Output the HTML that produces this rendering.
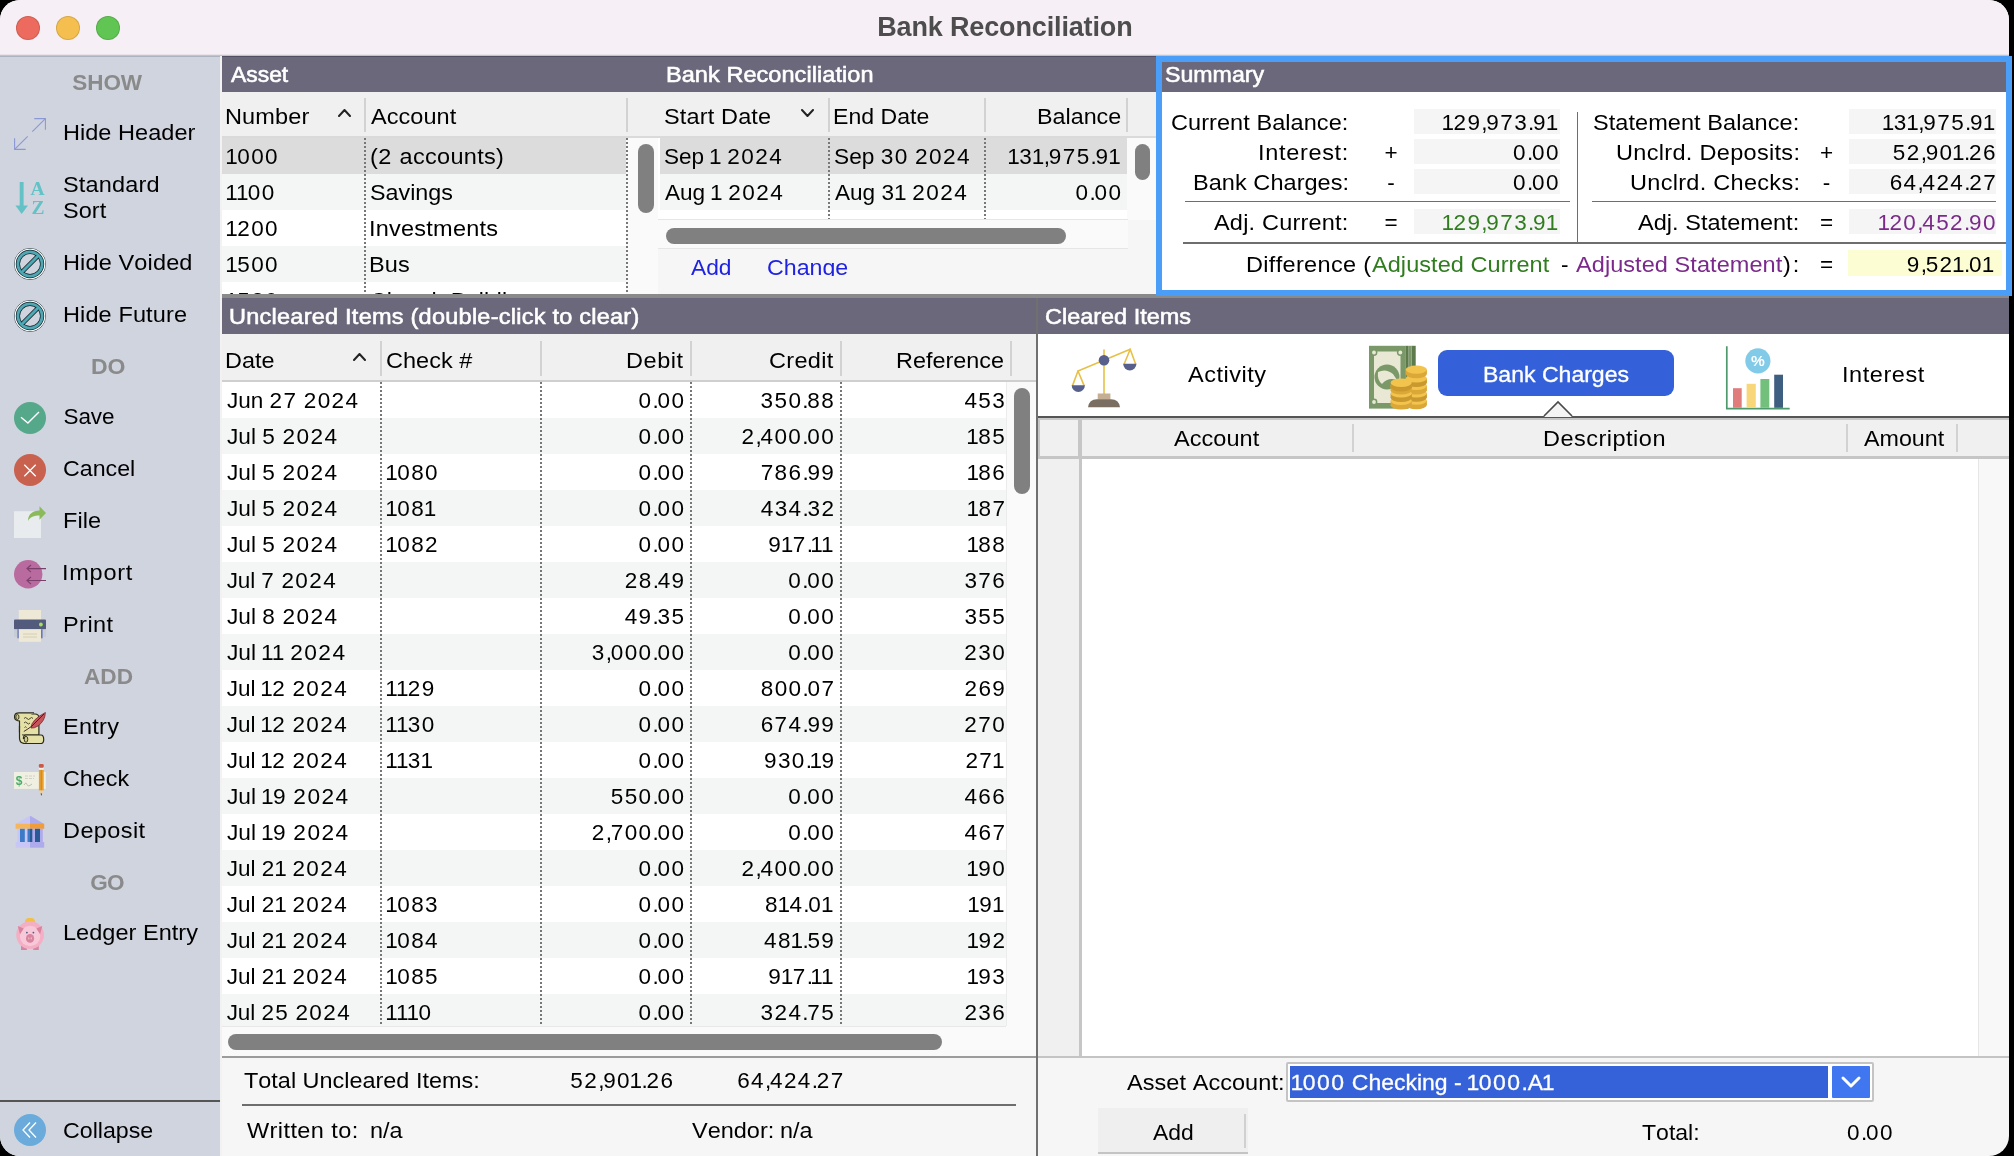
<!DOCTYPE html>
<html><head><meta charset="utf-8"><title>Bank Reconciliation</title>
<style>
html,body{margin:0;padding:0;background:#000;}
body{width:2014px;height:1156px;position:relative;overflow:hidden;font-family:"Liberation Sans", sans-serif;}
#w{position:absolute;left:0;top:0;width:2014px;height:1156px;overflow:hidden;will-change:transform;}
#w div,#w span,#w svg{position:absolute;}
#w span{white-space:pre;font-family:"Liberation Sans", sans-serif;font-kerning:none;}
#w i{font-style:normal;letter-spacing:1.4px}#w i.a{letter-spacing:-.55px;margin-left:-1.36px}#w i.b{letter-spacing:-1.26px}
</style></head><body>
<div id="w">
<div style="left:0;top:0;width:2009px;height:1156px;border-radius:20px;overflow:hidden;background:#f6f6f6">
<div style="left:0px;top:0px;width:2009px;height:55px;background:#f6f0f6;"></div>
<div style="left:0px;top:54px;width:2009px;height:1px;background:#e8e3e8;"></div>
<div style="left:0px;top:55px;width:2009px;height:1px;background:#c6c2c8;"></div>
<div style="left:16px;top:16px;width:24px;height:24px;background:#ec6a5e;border-radius:12px;box-shadow:inset 0 0 0 1px rgba(0,0,0,.13);"></div>
<div style="left:56px;top:16px;width:24px;height:24px;background:#f4bf4f;border-radius:12px;box-shadow:inset 0 0 0 1px rgba(0,0,0,.13);"></div>
<div style="left:96px;top:16px;width:24px;height:24px;background:#61c554;border-radius:12px;box-shadow:inset 0 0 0 1px rgba(0,0,0,.13);"></div>
<span style="left:877.19px;top:13.00px;line-height:28px;font-size:27px;font-weight:700;color:#4d4d4d;letter-spacing:-0.143px;">Bank Reconciliation</span>
<div style="left:0px;top:56px;width:220px;height:1120px;background:#d0d4de;"></div>
<div style="left:220px;top:56px;width:2px;height:1120px;background:#f2f2f2;"></div>
<span style="left:72.35px;top:69.00px;line-height:28px;font-size:22.5px;font-weight:700;color:#8a8a8a;letter-spacing:-0.108px;">SHOW</span>
<span style="left:91.46px;top:353.00px;line-height:28px;font-size:22.5px;font-weight:700;color:#8a8a8a;transform:scaleX(1.0224);transform-origin:0 50%;">DO</span>
<span style="left:84.19px;top:663.00px;line-height:28px;font-size:22.5px;font-weight:700;color:#8a8a8a;transform:scaleX(1.0055);transform-origin:0 50%;">ADD</span>
<span style="left:90.13px;top:869.00px;line-height:28px;font-size:22.5px;font-weight:700;color:#8a8a8a;letter-spacing:-0.635px;">GO</span>
<span style="left:62.57px;top:119.00px;line-height:28px;font-size:22.5px;letter-spacing:0.030px;transform:scaleX(1.0450);transform-origin:0 50%;">Hide Header</span>
<svg style="left:14px;top:118px" width="32" height="32" viewBox="0 0 32 32"><g fill="none" stroke="#8a98d6" stroke-width="1.1"><path d="M18.3 13.7 L31.4 0.6"/><path d="M20.3 0.6 H31.4 V11.7"/><path d="M13.7 18.3 L0.6 31.4"/><path d="M0.6 20.3 V31.4 H11.7"/></g></svg>
<span style="left:62.57px;top:249.00px;line-height:28px;font-size:22.5px;letter-spacing:0.128px;transform:scaleX(1.0450);transform-origin:0 50%;">Hide Voided</span>
<svg style="left:14px;top:248px" width="32" height="32" viewBox="0 0 32 32"><circle cx="16" cy="16" r="15.6" fill="none" stroke="#16262c" stroke-width="0.7"/><circle cx="16" cy="16" r="14.6" fill="none" stroke="#fff" stroke-width="1.4"/><circle cx="16" cy="16" r="12.1" fill="none" stroke="#16262c" stroke-width="4.2"/><circle cx="16" cy="16" r="12.1" fill="none" stroke="#4fa8b4" stroke-width="2.8"/><path d="M8.4 23.6 L23.6 8.4" stroke="#16262c" stroke-width="4.4"/><path d="M7.8 24.2 L24.2 7.8" stroke="#4fa8b4" stroke-width="3"/></svg>
<span style="left:62.57px;top:301.00px;line-height:28px;font-size:22.5px;letter-spacing:0.108px;transform:scaleX(1.0450);transform-origin:0 50%;">Hide Future</span>
<svg style="left:14px;top:300px" width="32" height="32" viewBox="0 0 32 32"><circle cx="16" cy="16" r="15.6" fill="none" stroke="#16262c" stroke-width="0.7"/><circle cx="16" cy="16" r="14.6" fill="none" stroke="#fff" stroke-width="1.4"/><circle cx="16" cy="16" r="12.1" fill="none" stroke="#16262c" stroke-width="4.2"/><circle cx="16" cy="16" r="12.1" fill="none" stroke="#4fa8b4" stroke-width="2.8"/><path d="M8.4 23.6 L23.6 8.4" stroke="#16262c" stroke-width="4.4"/><path d="M7.8 24.2 L24.2 7.8" stroke="#4fa8b4" stroke-width="3"/></svg>
<span style="left:63.48px;top:403.00px;line-height:28px;font-size:22.5px;letter-spacing:-0.088px;">Save</span>
<svg style="left:14px;top:402px" width="32" height="32" viewBox="0 0 32 32"><circle cx="16" cy="16" r="16" fill="#55a88a"/><path d="M7 15.3 L13.9 21.1 L25 9.9" fill="none" stroke="#fff" stroke-width="1.4"/></svg>
<span style="left:63.32px;top:455.00px;line-height:28px;font-size:22.5px;transform:scaleX(1.0313);transform-origin:0 50%;">Cancel</span>
<svg style="left:14px;top:454px" width="32" height="32" viewBox="0 0 32 32"><circle cx="16" cy="16" r="16" fill="#c9614f"/><path d="M10.3 10.8 L21.7 22.2 M21.7 10.8 L10.3 22.2" fill="none" stroke="#fff" stroke-width="1.4"/></svg>
<span style="left:62.57px;top:507.00px;line-height:28px;font-size:22.5px;letter-spacing:0.028px;transform:scaleX(1.0450);transform-origin:0 50%;">File</span>
<svg style="left:14px;top:506px" width="32" height="32" viewBox="0 0 32 32"><rect x="0" y="5.2" width="27" height="26.8" fill="#e8ecef"/><path d="M14 15 C14 8 19 4.5 25.5 4.5 L25.5 0.3 L32 7 L25.5 13.7 L25.5 9.5 C20 9.5 16 11 14 15 Z" fill="#8aba5a"/></svg>
<span style="left:62.33px;top:559.00px;line-height:28px;font-size:22.5px;letter-spacing:0.710px;transform:scaleX(1.0450);transform-origin:0 50%;">Import</span>
<svg style="left:14px;top:558px" width="32" height="32" viewBox="0 0 32 32"><circle cx="14.2" cy="16.2" r="14.2" fill="#b96a9f"/><g fill="none" stroke="#7a3f6a" stroke-width="1.1"><path d="M13 10.6 H32 M17 7 L13 10.6 L17 14.2"/><path d="M13 22.5 H32 M17 18.9 L13 22.5 L17 26.1"/></g></svg>
<span style="left:62.57px;top:611.00px;line-height:28px;font-size:22.5px;letter-spacing:0.420px;transform:scaleX(1.0450);transform-origin:0 50%;">Print</span>
<svg style="left:14px;top:610px" width="32" height="32" viewBox="0 0 32 32"><rect x="4.8" y="0" width="22.2" height="11" fill="#eee9d6"/><rect x="0" y="9.5" width="32" height="10" rx="1" fill="#525b7c"/><rect x="0" y="19.3" width="32" height="7.7" fill="#c8ccd4"/><rect x="3.4" y="19.3" width="1.6" height="9" fill="#6a78b8"/><rect x="27" y="19.3" width="1.6" height="9" fill="#6a78b8"/><rect x="4.8" y="19.3" width="22.2" height="12.5" fill="#eee9d6"/><circle cx="26.9" cy="14.5" r="1.9" fill="#a6e05e"/><path d="M9 24 H23 M9 27 H23" stroke="#d2cbae" stroke-width="0.9"/></svg>
<span style="left:62.57px;top:713.00px;line-height:28px;font-size:22.5px;letter-spacing:0.262px;transform:scaleX(1.0450);transform-origin:0 50%;">Entry</span>
<svg style="left:14px;top:712px" width="32" height="32" viewBox="0 0 32 32"><path d="M5.5 2 H21 Q24.9 2 24.9 6 V23 H9 Q5.5 23 5.5 20 Z" fill="#e4e0a6" stroke="#2a2a1a" stroke-width="1.2"/><path d="M6 9 Q0.5 9 0.5 5 Q0.5 0.9 5 0.9 H20" fill="#e4e0a6" stroke="#2a2a1a" stroke-width="1.2"/><ellipse cx="3.4" cy="5" rx="1.6" ry="2.6" fill="#cfca8c" stroke="#2a2a1a" stroke-width="0.9"/><path d="M5.5 14 V26 Q5.5 31.5 11 31.5 H27 Q29.7 31.5 29.7 27.5 Q29.7 23 27 23 H12 Q9.4 23 9.4 27 " fill="#e4e0a6" stroke="#2a2a1a" stroke-width="1.2"/><ellipse cx="12" cy="27.3" rx="1.8" ry="3" fill="#cfca8c" stroke="#2a2a1a" stroke-width="0.9"/><path d="M10 6.5 q1.5 -2 3 0 t3 0 t3 0 M10 11 q1.5 -2 3 0 t3 0 M10.5 15.5 q1 -1.5 2 0" stroke="#3a3826" stroke-width="0.9" fill="none"/><path d="M17 16 Q17 8 31.4 0.5 Q31 9 24 14 Q20 16.5 17 16 Z" fill="#c4555a" stroke="#7a2a30" stroke-width="0.8"/><path d="M9.8 19.5 Q14 17 18 14 L30 2" stroke="#3a1a1c" stroke-width="0.9" fill="none"/></svg>
<span style="left:63.31px;top:765.00px;line-height:28px;font-size:22.5px;transform:scaleX(1.0372);transform-origin:0 50%;">Check</span>
<svg style="left:14px;top:764px" width="32" height="32" viewBox="0 0 32 32"><rect x="0" y="8" width="31.8" height="16.9" fill="#efefe2"/><text x="1.8" y="20.6" font-family="Liberation Sans" font-weight="700" font-size="12" fill="#4aae68">$</text><path d="M11 12 H21 M11 14.5 H20" stroke="#cfd2c4" stroke-width="1" stroke-dasharray="3 1"/><path d="M10 21 Q12 17.5 13 20.5 T18 20" stroke="#a8b4a0" stroke-width="0.8" fill="none"/><rect x="24.9" y="5.6" width="4.8" height="21" fill="#e8a030"/><rect x="26.7" y="5.6" width="1.2" height="21" fill="#d08a22"/><rect x="24.9" y="3.6" width="4.8" height="2.2" fill="#f2ede6"/><rect x="24.9" y="0" width="4.8" height="3.8" rx="1.2" fill="#c85a4a"/><path d="M24.9 26.6 L27.3 31 L29.7 26.6 Z" fill="#e8cfa2"/><path d="M26.6 29.6 L27.3 32 L28 29.6 Z" fill="#333"/></svg>
<span style="left:62.57px;top:817.00px;line-height:28px;font-size:22.5px;letter-spacing:0.379px;transform:scaleX(1.0450);transform-origin:0 50%;">Deposit</span>
<svg style="left:14px;top:816px" width="32" height="32" viewBox="0 0 32 32"><path d="M16 -0.4 L16 7.9 L1.6 7.9 Z" fill="#c8c6f4"/><path d="M16 -0.4 L30.2 7.9 L16 7.9 Z" fill="#aeabec"/><rect x="1.6" y="7.8" width="14.4" height="5" fill="#f6b55a"/><rect x="16" y="7.8" width="14.2" height="5" fill="#f09c38"/><rect x="3.5" y="12.8" width="12.5" height="13.4" fill="#c8c6f4"/><rect x="16" y="12.8" width="12.8" height="13.4" fill="#aeabec"/><g><rect x="6" y="12.8" width="4.8" height="13.2" fill="#3c7ac8"/><rect x="13.5" y="12.8" width="2.5" height="13.2" fill="#3c7ac8"/><rect x="16" y="12.8" width="2.3" height="13.2" fill="#2a5a96"/><rect x="21" y="12.8" width="5" height="13.2" fill="#2a5a96"/></g><rect x="1.6" y="26" width="14.4" height="5.7" fill="#c8c6f4"/><rect x="16" y="26" width="14.2" height="5.7" fill="#aeabec"/></svg>
<span style="left:62.57px;top:919.00px;line-height:28px;font-size:22.5px;letter-spacing:0.031px;transform:scaleX(1.0450);transform-origin:0 50%;">Ledger Entry</span>
<svg style="left:14px;top:918px" width="32" height="32" viewBox="0 0 32 32"><rect x="7" y="25.5" width="5.9" height="6.5" fill="#d9849e"/><rect x="19.2" y="25.5" width="5.6" height="6.5" fill="#d9849e"/><ellipse cx="16" cy="3.6" rx="5" ry="3.9" fill="#f0c048"/><circle cx="16.1" cy="17.1" r="13.9" fill="#f4afc4"/><circle cx="16.1" cy="18" r="10.2" fill="#f6c8d8"/><path d="M3.8 8 L9.8 10.5 L6 16.2 Z M28.3 8 L22.3 10.5 L26.1 16.2 Z" fill="#d9849e"/><ellipse cx="16.06" cy="20.4" rx="4.1" ry="4.4" fill="#d9849e"/><ellipse cx="14.8" cy="20.4" rx="0.7" ry="1.1" fill="#f0b4c6"/><ellipse cx="17.3" cy="20.4" rx="0.7" ry="1.1" fill="#f0b4c6"/><circle cx="12.9" cy="14.6" r="0.9" fill="#4a5a80"/><circle cx="19.4" cy="14.6" r="0.9" fill="#4a5a80"/></svg>
<span style="left:63.32px;top:1117.00px;line-height:28px;font-size:22.5px;transform:scaleX(1.0304);transform-origin:0 50%;">Collapse</span>
<svg style="left:14px;top:1114px" width="32" height="32" viewBox="0 0 32 32"><circle cx="16" cy="16" r="16" fill="#6aabdc"/><g fill="none" stroke="#fff" stroke-width="1.3"><path d="M16 8.5 L9 16 L16 23.5"/><path d="M22 8.5 L15 16 L22 23.5"/></g></svg>
<span style="left:63.43px;top:171.00px;line-height:28px;font-size:22.5px;letter-spacing:0.158px;transform:scaleX(1.0450);transform-origin:0 50%;">Standard</span>
<span style="left:63.43px;top:197.00px;line-height:28px;font-size:22.5px;letter-spacing:0.038px;transform:scaleX(1.0450);transform-origin:0 50%;">Sort</span>
<svg style="left:14px;top:182px" width="32" height="32" viewBox="0 0 32 32"><g fill="#62c2c6"><rect x="5.7" y="0" width="3.9" height="25"/><path d="M1.4 23.5 L14 23.5 L7.7 32 Z"/></g><g fill="#62c2c6" font-family="Liberation Serif" font-weight="700" font-size="19.5"><text x="16.6" y="13.4">A</text><text x="17.6" y="31.6">Z</text></g></svg>
<div style="left:0px;top:1100px;width:220px;height:2px;background:#555;"></div>
<div style="left:222px;top:56px;width:934px;height:36px;background:#6a687a;"></div>
<div style="left:222px;top:56px;width:934px;height:1px;background:#504e60;"></div>
<div style="left:0px;top:56px;width:220px;height:1.4px;background:#adb3bf;"></div>
<span style="left:230.96px;top:61.00px;line-height:28px;font-size:22.5px;color:#fff;transform:scaleX(1.0167);transform-origin:0 50%;-webkit-text-stroke:0.6px #fff;">Asset</span>
<span style="left:666.07px;top:61.00px;line-height:28px;font-size:22.5px;color:#fff;letter-spacing:0.051px;transform:scaleX(1.0450);transform-origin:0 50%;-webkit-text-stroke:0.6px #fff;">Bank Reconciliation</span>
<div style="left:222px;top:92px;width:934px;height:44px;background:#f0f0f0;"></div>
<div style="left:222px;top:136px;width:934px;height:2px;background:#dadada;"></div>
<div style="left:364px;top:98px;width:2px;height:34px;background:#d2d2d2;"></div>
<div style="left:626px;top:98px;width:2px;height:34px;background:#d2d2d2;"></div>
<div style="left:828px;top:98px;width:2px;height:34px;background:#d2d2d2;"></div>
<div style="left:984px;top:98px;width:2px;height:34px;background:#d2d2d2;"></div>
<div style="left:1126px;top:98px;width:2px;height:34px;background:#d2d2d2;"></div>
<span style="left:225.07px;top:103.00px;line-height:28px;font-size:22.5px;letter-spacing:0.133px;transform:scaleX(1.0450);transform-origin:0 50%;">Number</span>
<span style="left:370.95px;top:103.00px;line-height:28px;font-size:22.5px;letter-spacing:0.042px;transform:scaleX(1.0450);transform-origin:0 50%;">Account</span>
<span style="left:663.93px;top:103.00px;line-height:28px;font-size:22.5px;letter-spacing:0.134px;transform:scaleX(1.0450);transform-origin:0 50%;">Start Date</span>
<span style="left:832.91px;top:103.00px;line-height:28px;font-size:22.5px;transform:scaleX(1.0256);transform-origin:0 50%;">End Date</span>
<span style="left:1036.59px;top:103.00px;line-height:28px;font-size:22.5px;transform:scaleX(1.0361);transform-origin:0 50%;">Balance</span>
<svg style="left:338px;top:109px" width="13" height="8" viewBox="0 0 13 8"><path d="M1 7 L6.5 1 L12 7" fill="none" stroke="#222" stroke-width="2" stroke-linecap="round" stroke-linejoin="round"/></svg>
<svg style="left:801px;top:109px" width="13" height="8" viewBox="0 0 13 8"><path d="M1 1 L6.5 7 L12 1" fill="none" stroke="#222" stroke-width="2" stroke-linecap="round" stroke-linejoin="round"/></svg>
<div style="left:222px;top:138px;width:436px;height:156px;overflow:hidden;background:#fff">
<div style="left:0px;top:0px;width:404px;height:36px;background:#dcdcdc;"></div>
<span style="left:4.65px;top:5.00px;line-height:28px;font-size:22.5px;"><i class=a>1</i><i class=d>000</i></span>
<span style="left:147.54px;top:5.00px;line-height:28px;font-size:22.5px;letter-spacing:0.294px;transform:scaleX(1.0450);transform-origin:0 50%;">(<i class=d>2</i> accounts)</span>
<div style="left:0px;top:36px;width:404px;height:36px;background:#f4f5f5;"></div>
<span style="left:4.65px;top:41.00px;line-height:28px;font-size:22.5px;"><i class=a>1</i><i class=a>1</i><i class=d>00</i></span>
<span style="left:147.94px;top:41.00px;line-height:28px;font-size:22.5px;transform:scaleX(1.0357);transform-origin:0 50%;">Savings</span>
<div style="left:0px;top:72px;width:404px;height:36px;background:#fff;"></div>
<span style="left:4.65px;top:77.00px;line-height:28px;font-size:22.5px;"><i class=a>1</i><i class=d>200</i></span>
<span style="left:146.83px;top:77.00px;line-height:28px;font-size:22.5px;letter-spacing:0.216px;transform:scaleX(1.0450);transform-origin:0 50%;">Investments</span>
<div style="left:0px;top:108px;width:404px;height:36px;background:#f4f5f5;"></div>
<span style="left:4.65px;top:113.00px;line-height:28px;font-size:22.5px;"><i class=a>1</i><i class=d>500</i></span>
<span style="left:147.07px;top:113.00px;line-height:28px;font-size:22.5px;letter-spacing:0.126px;transform:scaleX(1.0450);transform-origin:0 50%;">Bus</span>
<div style="left:0px;top:144px;width:404px;height:36px;background:#fff;"></div>
<span style="left:4.65px;top:149.00px;line-height:28px;font-size:22.5px;"><i class=a>1</i><i class=d>520</i></span>
<span style="left:147.83px;top:149.00px;line-height:28px;font-size:22.5px;transform:scaleX(1.0240);transform-origin:0 50%;">Church Building</span>
<div style="left:404px;top:0px;width:32px;height:156px;background:#fafafa;"></div>
<div style="left:142px;top:0px;width:2px;height:156px;background:repeating-linear-gradient(to bottom,#777 0,#777 2px,transparent 2px,transparent 4px)"></div>
<div style="left:404px;top:0px;width:2px;height:156px;background:repeating-linear-gradient(to bottom,#777 0,#777 2px,transparent 2px,transparent 4px)"></div>
<div style="left:416px;top:6px;width:16px;height:69px;background:#808080;border-radius:8px;"></div>
</div>
<div style="left:658px;top:138px;width:498px;height:82px;overflow:hidden;background:#fff">
<div style="left:2px;top:0px;width:467px;height:36px;background:#dcdcdc;"></div>
<span style="left:5.98px;top:5.00px;line-height:28px;font-size:22.5px;transform:scaleX(1.0025);transform-origin:0 50%;">Sep <i class=a>1</i> <i class=d>2024</i></span>
<span style="left:175.97px;top:5.00px;line-height:28px;font-size:22.5px;transform:scaleX(1.0080);transform-origin:0 50%;">Sep <i class=d>30</i> <i class=d>2024</i></span>
<span style="left:350.69px;top:5.00px;line-height:28px;font-size:22.5px;"><i class=a>1</i><i class=d>3</i><i class=a>1</i><i class=b>,</i><i class=d>975</i><i class=b>.</i><i class=d>9</i><i class=a>1</i></span>
<div style="left:2px;top:36px;width:467px;height:36px;background:#f4f5f5;"></div>
<span style="left:6.96px;top:41.00px;line-height:28px;font-size:22.5px;transform:scaleX(1.0027);transform-origin:0 50%;">Aug <i class=a>1</i> <i class=d>2024</i></span>
<span style="left:176.96px;top:41.00px;line-height:28px;font-size:22.5px;transform:scaleX(1.0030);transform-origin:0 50%;">Aug <i class=d>3</i><i class=a>1</i> <i class=d>2024</i></span>
<span style="left:417.55px;top:41.00px;line-height:28px;font-size:22.5px;"><i class=d>0</i><i class=b>.</i><i class=d>00</i></span>
<div style="left:2px;top:72px;width:467px;height:36px;background:#fff;"></div>
<span style="left:6.63px;top:77.00px;line-height:28px;font-size:22.5px;letter-spacing:0.030px;transform:scaleX(1.0450);transform-origin:0 50%;">Jul <i class=a>1</i> <i class=d>2024</i></span>
<span style="left:176.65px;top:77.00px;line-height:28px;font-size:22.5px;transform:scaleX(1.0082);transform-origin:0 50%;">Jul <i class=d>3</i><i class=a>1</i> <i class=d>2024</i></span>
<span style="left:417.55px;top:77.00px;line-height:28px;font-size:22.5px;"><i class=d>0</i><i class=b>.</i><i class=d>00</i></span>
<div style="left:170px;top:0px;width:2px;height:82px;background:repeating-linear-gradient(to bottom,#777 0,#777 2px,transparent 2px,transparent 4px)"></div>
<div style="left:326px;top:0px;width:2px;height:82px;background:repeating-linear-gradient(to bottom,#777 0,#777 2px,transparent 2px,transparent 4px)"></div>
<div style="left:469px;top:0px;width:29px;height:82px;background:#fafafa;"></div>
<div style="left:477px;top:6px;width:15px;height:36px;background:#808080;border-radius:7.5px;"></div>
</div>
<div style="left:658px;top:220px;width:470px;height:28px;background:#fafafa;"></div>
<div style="left:658px;top:219px;width:470px;height:1px;background:#e6e6e6;"></div>
<div style="left:658px;top:248px;width:470px;height:1px;background:#e6e6e6;"></div>
<div style="left:666px;top:228px;width:400px;height:16px;background:#808080;border-radius:8px;"></div>
<div style="left:658px;top:249px;width:498px;height:45px;background:#f6f6f6;"></div>
<div style="left:1128px;top:220px;width:28px;height:29px;background:#f6f6f6;"></div>
<div style="left:680px;top:250px;width:300px;height:25.5px;overflow:hidden">
<span style="left:10.96px;top:3.50px;line-height:28px;font-size:22.5px;color:#1f22e0;transform:scaleX(1.0119);transform-origin:0 50%;">Add</span>
<span style="left:86.82px;top:3.50px;line-height:28px;font-size:22.5px;color:#1f22e0;transform:scaleX(1.0303);transform-origin:0 50%;">Change</span>
</div>
<div style="left:1162px;top:62px;width:844px;height:228px;background:#fff;"></div>
<div style="left:1162px;top:62px;width:844px;height:30px;background:#6a687a;"></div>
<span style="left:1164.95px;top:60.50px;line-height:28px;font-size:22.5px;color:#fff;transform:scaleX(1.0294);transform-origin:0 50%;-webkit-text-stroke:0.6px #fff;">Summary</span>
<span style="left:1171.31px;top:109.00px;line-height:28px;font-size:22.5px;letter-spacing:0.058px;transform:scaleX(1.0450);transform-origin:0 50%;">Current Balance:</span>
<div style="left:1414px;top:109px;width:146px;height:25px;background:#f5f5f5;"></div>
<span style="left:1442.88px;top:109.00px;line-height:28px;font-size:22.5px;"><i class=a>1</i><i class=d>29</i><i class=b>,</i><i class=d>973</i><i class=b>.</i><i class=d>9</i><i class=a>1</i></span>
<span style="left:1258.33px;top:139.00px;line-height:28px;font-size:22.5px;letter-spacing:0.642px;transform:scaleX(1.0450);transform-origin:0 50%;">Interest:</span>
<span style="left:1384.44px;top:139.00px;line-height:28px;font-size:22.5px;letter-spacing:0.150px;">+</span>
<div style="left:1414px;top:139px;width:146px;height:25px;background:#f5f5f5;"></div>
<span style="left:1513.05px;top:139.00px;line-height:28px;font-size:22.5px;"><i class=d>0</i><i class=b>.</i><i class=d>00</i></span>
<span style="left:1192.57px;top:169.00px;line-height:28px;font-size:22.5px;letter-spacing:0.044px;transform:scaleX(1.0450);transform-origin:0 50%;">Bank Charges:</span>
<span style="left:1387.25px;top:169.00px;line-height:28px;font-size:22.5px;letter-spacing:0.150px;">-</span>
<div style="left:1414px;top:169px;width:146px;height:25px;background:#f5f5f5;"></div>
<span style="left:1513.05px;top:169.00px;line-height:28px;font-size:22.5px;"><i class=d>0</i><i class=b>.</i><i class=d>00</i></span>
<span style="left:1214.45px;top:209.00px;line-height:28px;font-size:22.5px;letter-spacing:0.176px;transform:scaleX(1.0450);transform-origin:0 50%;">Adj. Current:</span>
<span style="left:1384.44px;top:209.00px;line-height:28px;font-size:22.5px;letter-spacing:0.150px;">=</span>
<div style="left:1414px;top:209px;width:146px;height:25px;background:#f5f5f5;"></div>
<span style="left:1442.88px;top:209.00px;line-height:28px;font-size:22.5px;color:#2f7d1f;"><i class=a>1</i><i class=d>29</i><i class=b>,</i><i class=d>973</i><i class=b>.</i><i class=d>9</i><i class=a>1</i></span>
<span style="left:1593.43px;top:109.00px;line-height:28px;font-size:22.5px;letter-spacing:0.057px;transform:scaleX(1.0450);transform-origin:0 50%;">Statement Balance:</span>
<div style="left:1849px;top:109px;width:147px;height:25px;background:#f5f5f5;"></div>
<span style="left:1883.19px;top:109.00px;line-height:28px;font-size:22.5px;"><i class=a>1</i><i class=d>3</i><i class=a>1</i><i class=b>,</i><i class=d>975</i><i class=b>.</i><i class=d>9</i><i class=a>1</i></span>
<span style="left:1615.69px;top:139.00px;line-height:28px;font-size:22.5px;letter-spacing:0.296px;transform:scaleX(1.0450);transform-origin:0 50%;">Unclrd. Deposits:</span>
<span style="left:1819.94px;top:139.00px;line-height:28px;font-size:22.5px;letter-spacing:0.150px;">+</span>
<div style="left:1849px;top:139px;width:147px;height:25px;background:#f5f5f5;"></div>
<span style="left:1892.82px;top:139.00px;line-height:28px;font-size:22.5px;"><i class=d>52</i><i class=b>,</i><i class=d>90</i><i class=a>1</i><i class=b>.</i><i class=d>26</i></span>
<span style="left:1629.69px;top:169.00px;line-height:28px;font-size:22.5px;letter-spacing:0.275px;transform:scaleX(1.0450);transform-origin:0 50%;">Unclrd. Checks:</span>
<span style="left:1822.75px;top:169.00px;line-height:28px;font-size:22.5px;letter-spacing:0.150px;">-</span>
<div style="left:1849px;top:169px;width:147px;height:25px;background:#f5f5f5;"></div>
<span style="left:1889.66px;top:169.00px;line-height:28px;font-size:22.5px;"><i class=d>64</i><i class=b>,</i><i class=d>424</i><i class=b>.</i><i class=d>27</i></span>
<span style="left:1638.45px;top:209.00px;line-height:28px;font-size:22.5px;letter-spacing:0.030px;transform:scaleX(1.0450);transform-origin:0 50%;">Adj. Statement:</span>
<span style="left:1819.94px;top:209.00px;line-height:28px;font-size:22.5px;letter-spacing:0.150px;">=</span>
<div style="left:1849px;top:209px;width:147px;height:25px;background:#f5f5f5;"></div>
<span style="left:1878.80px;top:209.00px;line-height:28px;font-size:22.5px;color:#7b2a8b;"><i class=a>1</i><i class=d>20</i><i class=b>,</i><i class=d>452</i><i class=b>.</i><i class=d>90</i></span>
<div style="left:1185px;top:200.5px;width:385px;height:1.5px;background:#6e6e6e;"></div>
<div style="left:1592px;top:200.5px;width:404px;height:1.5px;background:#6e6e6e;"></div>
<div style="left:1576.5px;top:112px;width:1.5px;height:131px;background:#6e6e6e;"></div>
<div style="left:1183px;top:242px;width:823px;height:1.5px;background:#6e6e6e;"></div>
<div style="left:1848px;top:250px;width:154px;height:25.8px;background:#fdfdd4;"></div>
<span style="left:1906.71px;top:251.00px;line-height:28px;font-size:22.5px;"><i class=d>9</i><i class=b>,</i><i class=d>52</i><i class=a>1</i><i class=b>.</i><i class=d>0</i><i class=a>1</i></span>
<span style="left:1819.94px;top:251.00px;line-height:28px;font-size:22.5px;letter-spacing:0.150px;">=</span>
<span style="left:1783.36px;top:251.00px;line-height:28px;font-size:22.5px;letter-spacing:1.840px;transform:scaleX(1.0450);transform-origin:0 50%;">):</span>
<span style="left:1576.45px;top:251.00px;line-height:28px;font-size:22.5px;color:#7b2a8b;letter-spacing:0.057px;transform:scaleX(1.0450);transform-origin:0 50%;">Adjusted Statement</span>
<span style="left:1561.01px;top:251.00px;line-height:28px;font-size:22.5px;letter-spacing:0.150px;">-</span>
<span style="left:1372.45px;top:251.00px;line-height:28px;font-size:22.5px;color:#2f7d1f;letter-spacing:0.050px;transform:scaleX(1.0450);transform-origin:0 50%;">Adjusted Current</span>
<span style="left:1246.07px;top:251.00px;line-height:28px;font-size:22.5px;letter-spacing:0.308px;transform:scaleX(1.0450);transform-origin:0 50%;">Difference (</span>
<div style="left:222px;top:294px;width:1787px;height:4px;background:#8a8a8a;"></div>
<div style="left:222px;top:298px;width:814px;height:36px;background:#6a687a;"></div>
<span style="left:229.19px;top:303.00px;line-height:28px;font-size:22.5px;color:#fff;letter-spacing:0.229px;transform:scaleX(1.0450);transform-origin:0 50%;-webkit-text-stroke:0.6px #fff;">Uncleared Items (double-click to clear)</span>
<div style="left:222px;top:334px;width:814px;height:46px;background:#f0f0f0;"></div>
<div style="left:222px;top:380px;width:814px;height:2px;background:#cfcfcf;"></div>
<div style="left:380px;top:341px;width:2px;height:35px;background:#d2d2d2;"></div>
<div style="left:540px;top:341px;width:2px;height:35px;background:#d2d2d2;"></div>
<div style="left:690px;top:341px;width:2px;height:35px;background:#d2d2d2;"></div>
<div style="left:840px;top:341px;width:2px;height:35px;background:#d2d2d2;"></div>
<div style="left:1010px;top:341px;width:2px;height:35px;background:#d2d2d2;"></div>
<span style="left:225.28px;top:347.00px;line-height:28px;font-size:22.5px;transform:scaleX(1.0407);transform-origin:0 50%;">Date</span>
<span style="left:385.81px;top:347.00px;line-height:28px;font-size:22.5px;letter-spacing:0.009px;transform:scaleX(1.0450);transform-origin:0 50%;">Check #</span>
<span style="left:626.07px;top:347.00px;line-height:28px;font-size:22.5px;letter-spacing:0.529px;transform:scaleX(1.0450);transform-origin:0 50%;">Debit</span>
<span style="left:768.81px;top:347.00px;line-height:28px;font-size:22.5px;letter-spacing:0.315px;transform:scaleX(1.0450);transform-origin:0 50%;">Credit</span>
<span style="left:896.38px;top:347.00px;line-height:28px;font-size:22.5px;transform:scaleX(1.0400);transform-origin:0 50%;">Reference</span>
<svg style="left:353px;top:353px" width="13" height="8" viewBox="0 0 13 8"><path d="M1 7 L6.5 1 L12 7" fill="none" stroke="#222" stroke-width="2" stroke-linecap="round" stroke-linejoin="round"/></svg>
<div style="left:222px;top:382px;width:814px;height:644px;overflow:hidden;background:#fff">
<span style="left:4.65px;top:5.00px;line-height:28px;font-size:22.5px;transform:scaleX(1.0012);transform-origin:0 50%;">Jun <i class=d>27</i> <i class=d>2024</i></span>
<span style="left:416.55px;top:5.00px;line-height:28px;font-size:22.5px;"><i class=d>0</i><i class=b>.</i><i class=d>00</i></span>
<span style="left:538.62px;top:5.00px;line-height:28px;font-size:22.5px;"><i class=d>350</i><i class=b>.</i><i class=d>88</i></span>
<span style="left:742.45px;top:5.00px;line-height:28px;font-size:22.5px;"><i class=d>453</i></span>
<div style="left:0px;top:36px;width:784px;height:36px;background:#f4f5f5;"></div>
<span style="left:4.65px;top:41.00px;line-height:28px;font-size:22.5px;transform:scaleX(1.0053);transform-origin:0 50%;">Jul <i class=d>5</i> <i class=d>2024</i></span>
<span style="left:416.55px;top:41.00px;line-height:28px;font-size:22.5px;"><i class=d>0</i><i class=b>.</i><i class=d>00</i></span>
<span style="left:519.62px;top:41.00px;line-height:28px;font-size:22.5px;"><i class=d>2</i><i class=b>,</i><i class=d>400</i><i class=b>.</i><i class=d>00</i></span>
<span style="left:745.71px;top:41.00px;line-height:28px;font-size:22.5px;"><i class=a>1</i><i class=d>85</i></span>
<span style="left:4.65px;top:77.00px;line-height:28px;font-size:22.5px;transform:scaleX(1.0053);transform-origin:0 50%;">Jul <i class=d>5</i> <i class=d>2024</i></span>
<span style="left:164.65px;top:77.00px;line-height:28px;font-size:22.5px;"><i class=a>1</i><i class=d>080</i></span>
<span style="left:416.55px;top:77.00px;line-height:28px;font-size:22.5px;"><i class=d>0</i><i class=b>.</i><i class=d>00</i></span>
<span style="left:538.71px;top:77.00px;line-height:28px;font-size:22.5px;"><i class=d>786</i><i class=b>.</i><i class=d>99</i></span>
<span style="left:745.76px;top:77.00px;line-height:28px;font-size:22.5px;"><i class=a>1</i><i class=d>86</i></span>
<div style="left:0px;top:108px;width:784px;height:36px;background:#f4f5f5;"></div>
<span style="left:4.65px;top:113.00px;line-height:28px;font-size:22.5px;transform:scaleX(1.0053);transform-origin:0 50%;">Jul <i class=d>5</i> <i class=d>2024</i></span>
<span style="left:164.65px;top:113.00px;line-height:28px;font-size:22.5px;"><i class=a>1</i><i class=d>08</i><i class=a>1</i></span>
<span style="left:416.55px;top:113.00px;line-height:28px;font-size:22.5px;"><i class=d>0</i><i class=b>.</i><i class=d>00</i></span>
<span style="left:538.77px;top:113.00px;line-height:28px;font-size:22.5px;"><i class=d>434</i><i class=b>.</i><i class=d>32</i></span>
<span style="left:745.90px;top:113.00px;line-height:28px;font-size:22.5px;"><i class=a>1</i><i class=d>87</i></span>
<span style="left:4.65px;top:149.00px;line-height:28px;font-size:22.5px;transform:scaleX(1.0053);transform-origin:0 50%;">Jul <i class=d>5</i> <i class=d>2024</i></span>
<span style="left:164.65px;top:149.00px;line-height:28px;font-size:22.5px;"><i class=a>1</i><i class=d>082</i></span>
<span style="left:416.55px;top:149.00px;line-height:28px;font-size:22.5px;"><i class=d>0</i><i class=b>.</i><i class=d>00</i></span>
<span style="left:546.22px;top:149.00px;line-height:28px;font-size:22.5px;"><i class=d>9</i><i class=a>1</i><i class=d>7</i><i class=b>.</i><i class=a>1</i><i class=a>1</i></span>
<span style="left:745.75px;top:149.00px;line-height:28px;font-size:22.5px;"><i class=a>1</i><i class=d>88</i></span>
<div style="left:0px;top:180px;width:784px;height:36px;background:#f4f5f5;"></div>
<span style="left:4.65px;top:185.00px;line-height:28px;font-size:22.5px;letter-spacing:-0.084px;">Jul <i class=d>7</i> <i class=d>2024</i></span>
<span style="left:402.82px;top:185.00px;line-height:28px;font-size:22.5px;"><i class=d>28</i><i class=b>.</i><i class=d>49</i></span>
<span style="left:566.35px;top:185.00px;line-height:28px;font-size:22.5px;"><i class=d>0</i><i class=b>.</i><i class=d>00</i></span>
<span style="left:742.45px;top:185.00px;line-height:28px;font-size:22.5px;"><i class=d>376</i></span>
<span style="left:4.65px;top:221.00px;line-height:28px;font-size:22.5px;transform:scaleX(1.0053);transform-origin:0 50%;">Jul <i class=d>8</i> <i class=d>2024</i></span>
<span style="left:402.70px;top:221.00px;line-height:28px;font-size:22.5px;"><i class=d>49</i><i class=b>.</i><i class=d>35</i></span>
<span style="left:566.35px;top:221.00px;line-height:28px;font-size:22.5px;"><i class=d>0</i><i class=b>.</i><i class=d>00</i></span>
<span style="left:742.40px;top:221.00px;line-height:28px;font-size:22.5px;"><i class=d>355</i></span>
<div style="left:0px;top:252px;width:784px;height:36px;background:#f4f5f5;"></div>
<span style="left:4.64px;top:257.00px;line-height:28px;font-size:22.5px;transform:scaleX(1.0111);transform-origin:0 50%;">Jul <i class=a>1</i><i class=a>1</i> <i class=d>2024</i></span>
<span style="left:369.82px;top:257.00px;line-height:28px;font-size:22.5px;"><i class=d>3</i><i class=b>,</i><i class=d>000</i><i class=b>.</i><i class=d>00</i></span>
<span style="left:566.35px;top:257.00px;line-height:28px;font-size:22.5px;"><i class=d>0</i><i class=b>.</i><i class=d>00</i></span>
<span style="left:742.34px;top:257.00px;line-height:28px;font-size:22.5px;"><i class=d>230</i></span>
<span style="left:4.65px;top:293.00px;line-height:28px;font-size:22.5px;">Jul <i class=a>1</i><i class=d>2</i> <i class=d>2024</i></span>
<span style="left:164.65px;top:293.00px;line-height:28px;font-size:22.5px;"><i class=a>1</i><i class=a>1</i><i class=d>29</i></span>
<span style="left:416.55px;top:293.00px;line-height:28px;font-size:22.5px;"><i class=d>0</i><i class=b>.</i><i class=d>00</i></span>
<span style="left:538.77px;top:293.00px;line-height:28px;font-size:22.5px;"><i class=d>800</i><i class=b>.</i><i class=d>07</i></span>
<span style="left:742.53px;top:293.00px;line-height:28px;font-size:22.5px;"><i class=d>269</i></span>
<div style="left:0px;top:324px;width:784px;height:36px;background:#f4f5f5;"></div>
<span style="left:4.65px;top:329.00px;line-height:28px;font-size:22.5px;">Jul <i class=a>1</i><i class=d>2</i> <i class=d>2024</i></span>
<span style="left:164.65px;top:329.00px;line-height:28px;font-size:22.5px;"><i class=a>1</i><i class=a>1</i><i class=d>30</i></span>
<span style="left:416.55px;top:329.00px;line-height:28px;font-size:22.5px;"><i class=d>0</i><i class=b>.</i><i class=d>00</i></span>
<span style="left:538.71px;top:329.00px;line-height:28px;font-size:22.5px;"><i class=d>674</i><i class=b>.</i><i class=d>99</i></span>
<span style="left:742.34px;top:329.00px;line-height:28px;font-size:22.5px;"><i class=d>270</i></span>
<span style="left:4.65px;top:365.00px;line-height:28px;font-size:22.5px;">Jul <i class=a>1</i><i class=d>2</i> <i class=d>2024</i></span>
<span style="left:164.65px;top:365.00px;line-height:28px;font-size:22.5px;"><i class=a>1</i><i class=a>1</i><i class=d>3</i><i class=a>1</i></span>
<span style="left:416.55px;top:365.00px;line-height:28px;font-size:22.5px;"><i class=d>0</i><i class=b>.</i><i class=d>00</i></span>
<span style="left:542.02px;top:365.00px;line-height:28px;font-size:22.5px;"><i class=d>930</i><i class=b>.</i><i class=a>1</i><i class=d>9</i></span>
<span style="left:743.42px;top:365.00px;line-height:28px;font-size:22.5px;"><i class=d>27</i><i class=a>1</i></span>
<div style="left:0px;top:396px;width:784px;height:36px;background:#f4f5f5;"></div>
<span style="left:4.65px;top:401.00px;line-height:28px;font-size:22.5px;transform:scaleX(1.0082);transform-origin:0 50%;">Jul <i class=a>1</i><i class=d>9</i> <i class=d>2024</i></span>
<span style="left:388.72px;top:401.00px;line-height:28px;font-size:22.5px;"><i class=d>550</i><i class=b>.</i><i class=d>00</i></span>
<span style="left:566.35px;top:401.00px;line-height:28px;font-size:22.5px;"><i class=d>0</i><i class=b>.</i><i class=d>00</i></span>
<span style="left:742.45px;top:401.00px;line-height:28px;font-size:22.5px;"><i class=d>466</i></span>
<span style="left:4.65px;top:437.00px;line-height:28px;font-size:22.5px;transform:scaleX(1.0082);transform-origin:0 50%;">Jul <i class=a>1</i><i class=d>9</i> <i class=d>2024</i></span>
<span style="left:369.82px;top:437.00px;line-height:28px;font-size:22.5px;"><i class=d>2</i><i class=b>,</i><i class=d>700</i><i class=b>.</i><i class=d>00</i></span>
<span style="left:566.35px;top:437.00px;line-height:28px;font-size:22.5px;"><i class=d>0</i><i class=b>.</i><i class=d>00</i></span>
<span style="left:742.59px;top:437.00px;line-height:28px;font-size:22.5px;"><i class=d>467</i></span>
<div style="left:0px;top:468px;width:784px;height:36px;background:#f4f5f5;"></div>
<span style="left:4.65px;top:473.00px;line-height:28px;font-size:22.5px;">Jul <i class=d>2</i><i class=a>1</i> <i class=d>2024</i></span>
<span style="left:416.55px;top:473.00px;line-height:28px;font-size:22.5px;"><i class=d>0</i><i class=b>.</i><i class=d>00</i></span>
<span style="left:519.62px;top:473.00px;line-height:28px;font-size:22.5px;"><i class=d>2</i><i class=b>,</i><i class=d>400</i><i class=b>.</i><i class=d>00</i></span>
<span style="left:745.65px;top:473.00px;line-height:28px;font-size:22.5px;"><i class=a>1</i><i class=d>90</i></span>
<span style="left:4.65px;top:509.00px;line-height:28px;font-size:22.5px;">Jul <i class=d>2</i><i class=a>1</i> <i class=d>2024</i></span>
<span style="left:164.65px;top:509.00px;line-height:28px;font-size:22.5px;"><i class=a>1</i><i class=d>083</i></span>
<span style="left:416.55px;top:509.00px;line-height:28px;font-size:22.5px;"><i class=d>0</i><i class=b>.</i><i class=d>00</i></span>
<span style="left:542.91px;top:509.00px;line-height:28px;font-size:22.5px;"><i class=d>8</i><i class=a>1</i><i class=d>4</i><i class=b>.</i><i class=d>0</i><i class=a>1</i></span>
<span style="left:746.73px;top:509.00px;line-height:28px;font-size:22.5px;"><i class=a>1</i><i class=d>9</i><i class=a>1</i></span>
<div style="left:0px;top:540px;width:784px;height:36px;background:#f4f5f5;"></div>
<span style="left:4.65px;top:545.00px;line-height:28px;font-size:22.5px;">Jul <i class=d>2</i><i class=a>1</i> <i class=d>2024</i></span>
<span style="left:164.65px;top:545.00px;line-height:28px;font-size:22.5px;"><i class=a>1</i><i class=d>084</i></span>
<span style="left:416.55px;top:545.00px;line-height:28px;font-size:22.5px;"><i class=d>0</i><i class=b>.</i><i class=d>00</i></span>
<span style="left:542.02px;top:545.00px;line-height:28px;font-size:22.5px;"><i class=d>48</i><i class=a>1</i><i class=b>.</i><i class=d>59</i></span>
<span style="left:745.90px;top:545.00px;line-height:28px;font-size:22.5px;"><i class=a>1</i><i class=d>92</i></span>
<span style="left:4.65px;top:581.00px;line-height:28px;font-size:22.5px;">Jul <i class=d>2</i><i class=a>1</i> <i class=d>2024</i></span>
<span style="left:164.65px;top:581.00px;line-height:28px;font-size:22.5px;"><i class=a>1</i><i class=d>085</i></span>
<span style="left:416.55px;top:581.00px;line-height:28px;font-size:22.5px;"><i class=d>0</i><i class=b>.</i><i class=d>00</i></span>
<span style="left:546.22px;top:581.00px;line-height:28px;font-size:22.5px;"><i class=d>9</i><i class=a>1</i><i class=d>7</i><i class=b>.</i><i class=a>1</i><i class=a>1</i></span>
<span style="left:745.76px;top:581.00px;line-height:28px;font-size:22.5px;"><i class=a>1</i><i class=d>93</i></span>
<div style="left:0px;top:612px;width:784px;height:36px;background:#f4f5f5;"></div>
<span style="left:4.65px;top:617.00px;line-height:28px;font-size:22.5px;letter-spacing:-0.067px;">Jul <i class=d>25</i> <i class=d>2024</i></span>
<span style="left:164.65px;top:617.00px;line-height:28px;font-size:22.5px;"><i class=a>1</i><i class=a>1</i><i class=a>1</i><i class=d>0</i></span>
<span style="left:416.55px;top:617.00px;line-height:28px;font-size:22.5px;"><i class=d>0</i><i class=b>.</i><i class=d>00</i></span>
<span style="left:538.59px;top:617.00px;line-height:28px;font-size:22.5px;"><i class=d>324</i><i class=b>.</i><i class=d>75</i></span>
<span style="left:742.45px;top:617.00px;line-height:28px;font-size:22.5px;"><i class=d>236</i></span>
<div style="left:158px;top:0px;width:2px;height:644px;background:repeating-linear-gradient(to bottom,#777 0,#777 2px,transparent 2px,transparent 4px)"></div>
<div style="left:318px;top:0px;width:2px;height:644px;background:repeating-linear-gradient(to bottom,#777 0,#777 2px,transparent 2px,transparent 4px)"></div>
<div style="left:468px;top:0px;width:2px;height:644px;background:repeating-linear-gradient(to bottom,#777 0,#777 2px,transparent 2px,transparent 4px)"></div>
<div style="left:618px;top:0px;width:2px;height:644px;background:repeating-linear-gradient(to bottom,#777 0,#777 2px,transparent 2px,transparent 4px)"></div>
<div style="left:784px;top:0px;width:30px;height:644px;background:#fafafa;"></div>
<div style="left:784px;top:0px;width:1px;height:644px;background:#ececec;"></div>
<div style="left:792px;top:6px;width:16px;height:106px;background:#808080;border-radius:8px;"></div>
</div>
<div style="left:222px;top:1026px;width:814px;height:30px;background:#fafafa;"></div>
<div style="left:222px;top:1026px;width:784px;height:1px;background:#e8e8e8;"></div>
<div style="left:228px;top:1034px;width:714px;height:16px;background:#808080;border-radius:8px;"></div>
<div style="left:222px;top:1056px;width:814px;height:2px;background:#9c9c9c;"></div>
<span style="left:244.47px;top:1067.00px;line-height:28px;font-size:22.5px;transform:scaleX(1.0412);transform-origin:0 50%;">Total Uncleared Items:</span>
<span style="left:570.32px;top:1067.00px;line-height:28px;font-size:22.5px;"><i class=d>52</i><i class=b>,</i><i class=d>90</i><i class=a>1</i><i class=b>.</i><i class=d>26</i></span>
<span style="left:737.16px;top:1067.00px;line-height:28px;font-size:22.5px;"><i class=d>64</i><i class=b>,</i><i class=d>424</i><i class=b>.</i><i class=d>27</i></span>
<div style="left:242px;top:1104px;width:774px;height:2px;background:#6e6e6e;"></div>
<span style="left:246.90px;top:1117.00px;line-height:28px;font-size:22.5px;letter-spacing:0.394px;transform:scaleX(1.0450);transform-origin:0 50%;">Written to:</span>
<span style="left:370.44px;top:1117.00px;line-height:28px;font-size:22.5px;transform:scaleX(1.0408);transform-origin:0 50%;">n/a</span>
<span style="left:691.90px;top:1117.00px;line-height:28px;font-size:22.5px;transform:scaleX(1.0437);transform-origin:0 50%;">Vendor:</span>
<span style="left:780.44px;top:1117.00px;line-height:28px;font-size:22.5px;transform:scaleX(1.0408);transform-origin:0 50%;">n/a</span>
<div style="left:1036px;top:298px;width:2px;height:880px;background:#707070;"></div>
<div style="left:1038px;top:298px;width:971px;height:36px;background:#6a687a;"></div>
<span style="left:1044.81px;top:303.00px;line-height:28px;font-size:22.5px;color:#fff;transform:scaleX(1.0427);transform-origin:0 50%;-webkit-text-stroke:0.6px #fff;">Cleared Items</span>
<div style="left:1038px;top:334px;width:971px;height:82px;background:#fff;"></div>
<svg style="left:1070px;top:346px" width="70" height="66" viewBox="0 0 70 66"><g fill="none" stroke="#e8c048" stroke-width="1.6" stroke-linecap="round"><path d="M34 4 V48"/><path d="M8 25 L60.2 3.2"/><path d="M8 25 L2.6 39.4 M8 25 L14 39.4"/><path d="M60.2 3.2 L54.2 18 M60.2 3.2 L65.6 18"/></g>
<path d="M1.7 39.2 H14.9 A6.6 6.8 0 0 1 1.7 39.2 Z" fill="#56608a"/><path d="M53.2 17.8 H66.4 A6.6 6.8 0 0 1 53.2 17.8 Z" fill="#56608a"/>
<circle cx="34" cy="14.2" r="5.3" fill="#56608a"/><rect x="27.7" y="47.5" width="12.7" height="6" fill="#c4ae94"/><path d="M18 61.3 Q19 53.2 27 53.2 H41 Q49 53.2 50 61.3 Z" fill="#7a6e62"/></svg>
<svg style="left:1366px;top:344px" width="62" height="68" viewBox="0 0 62 68"><rect x="45.5" y="1.8" width="4.2" height="40" fill="#5c7a4c"/><rect x="42.5" y="1.8" width="3" height="62" fill="#7a9868"/><rect x="39.3" y="1.8" width="3.2" height="62.8" fill="#5c7a4c"/>
<rect x="3" y="1.8" width="36.3" height="62.8" fill="#7a9868"/><rect x="8" y="7.5" width="26.5" height="51.5" fill="#e8e8d4"/>
<circle cx="8" cy="8.5" r="3.4" fill="#7a9868"/><circle cx="34.3" cy="8.5" r="3.4" fill="#7a9868"/><circle cx="8" cy="58" r="3.4" fill="#7a9868"/><circle cx="34.3" cy="58" r="3.4" fill="#7a9868"/>
<circle cx="8" cy="8.5" r="1.9" fill="#e8e8d4"/><circle cx="34.3" cy="8.5" r="1.9" fill="#e8e8d4"/><circle cx="8" cy="58" r="1.9" fill="#e8e8d4"/>
<circle cx="21" cy="33" r="12.5" fill="#7a9868"/><path d="M12 28 Q20 24 27 30 L31 36 Q22 33 16 40 Q11 36 12 28 Z" fill="#e8e8d4"/><ellipse cx="50.3" cy="61.0" rx="10.6" ry="4.2" fill="#dba838"/><rect x="39.699999999999996" y="56.6" width="21.2" height="4.4" fill="#dba838"/><ellipse cx="50.3" cy="56.6" rx="10.6" ry="4.2" fill="#f2c44e"/><ellipse cx="50.3" cy="53.6" rx="10.6" ry="4.2" fill="#c9982e"/><rect x="39.699999999999996" y="49.2" width="21.2" height="4.4" fill="#c9982e"/><ellipse cx="50.3" cy="49.2" rx="10.6" ry="4.2" fill="#f2c44e"/><ellipse cx="50.3" cy="46.2" rx="10.6" ry="4.2" fill="#dba838"/><rect x="39.699999999999996" y="41.8" width="21.2" height="4.4" fill="#dba838"/><ellipse cx="50.3" cy="41.8" rx="10.6" ry="4.2" fill="#f2c44e"/><ellipse cx="50.3" cy="38.8" rx="10.6" ry="4.2" fill="#c9982e"/><rect x="39.699999999999996" y="34.4" width="21.2" height="4.4" fill="#c9982e"/><ellipse cx="50.3" cy="34.4" rx="10.6" ry="4.2" fill="#f2c44e"/><ellipse cx="50.3" cy="30.0" rx="10.6" ry="4.2" fill="#dba838"/><rect x="39.699999999999996" y="25.6" width="21.2" height="4.4" fill="#dba838"/><ellipse cx="50.3" cy="25.6" rx="10.6" ry="4.2" fill="#f2c44e"/><ellipse cx="35.2" cy="61.2" rx="10.6" ry="4.2" fill="#dba838"/><rect x="24.6" y="56.8" width="21.2" height="4.4" fill="#dba838"/><ellipse cx="35.2" cy="56.8" rx="10.6" ry="4.2" fill="#f2c44e"/><ellipse cx="35.2" cy="53.8" rx="10.6" ry="4.2" fill="#c9982e"/><rect x="24.6" y="49.4" width="21.2" height="4.4" fill="#c9982e"/><ellipse cx="35.2" cy="49.4" rx="10.6" ry="4.2" fill="#f2c44e"/><ellipse cx="35.2" cy="46.4" rx="10.6" ry="4.2" fill="#dba838"/><rect x="24.6" y="42.0" width="21.2" height="4.4" fill="#dba838"/><ellipse cx="35.2" cy="42.0" rx="10.6" ry="4.2" fill="#f2c44e"/><ellipse cx="35.2" cy="43.2" rx="10.6" ry="4.2" fill="#c9982e"/><rect x="24.6" y="38.8" width="21.2" height="4.4" fill="#c9982e"/><ellipse cx="35.2" cy="38.8" rx="10.6" ry="4.2" fill="#f2c44e"/></svg>
<svg style="left:1724px;top:344px" width="68" height="68" viewBox="0 0 68 68"><path d="M2.8 2.2 V64.6 H65.7" fill="none" stroke="#4f9a6c" stroke-width="1.7"/>
<rect x="9" y="44.2" width="8.7" height="19.6" fill="#e07c7c"/><rect x="22.6" y="39.8" width="9.2" height="24" fill="#f7d77a"/><rect x="36.4" y="35" width="8.9" height="28.8" fill="#72c07c"/><rect x="50.2" y="30.7" width="8.8" height="33.1" fill="#3f5f80"/>
<circle cx="33.9" cy="16.8" r="12.6" fill="#82cbe8"/><text x="33.9" y="22.4" text-anchor="middle" font-family="Liberation Sans" font-weight="700" font-size="15.5" fill="#fff">%</text></svg>
<span style="left:1187.95px;top:361.00px;line-height:28px;font-size:22.5px;letter-spacing:0.496px;transform:scaleX(1.0450);transform-origin:0 50%;">Activity</span>
<div style="left:1438px;top:350px;width:236px;height:45.8px;background:#3461d9;border-radius:9px;"></div>
<span style="left:1482.96px;top:360.50px;line-height:28px;font-size:22.5px;color:#fff;transform:scaleX(1.0241);transform-origin:0 50%;-webkit-text-stroke:0.35px #fff;">Bank Charges</span>
<span style="left:1841.83px;top:361.00px;line-height:28px;font-size:22.5px;letter-spacing:0.537px;transform:scaleX(1.0450);transform-origin:0 50%;">Interest</span>
<div style="left:1038px;top:416px;width:971px;height:2px;background:#555;"></div>
<svg style="left:1542px;top:399px" width="32" height="18" viewBox="0 0 32 18"><path d="M2 18 L16 3 L30 18 Z" fill="#f4f4f4"/><path d="M2 17 L16 3 L30 17" fill="none" stroke="#4a4a4a" stroke-width="1.6"/></svg>
<div style="left:1038px;top:418px;width:971px;height:38px;background:#f0f0f0;"></div>
<div style="left:1038px;top:456px;width:971px;height:3.6px;background:#c6c6c6;"></div>
<div style="left:1078.2px;top:418px;width:3.6px;height:640px;background:#c6c6c6;"></div>
<div style="left:1038px;top:418px;width:971px;height:1.8px;background:#c6c6c6;"></div>
<div style="left:1038px;top:418px;width:1.8px;height:640px;background:#c6c6c6;"></div>
<div style="left:1038px;top:459px;width:41px;height:597px;background:#f0f0f0;"></div>
<div style="left:1082px;top:459px;width:896px;height:597px;background:#fff;"></div>
<div style="left:1978px;top:459px;width:31px;height:597px;background:#f8f8f8;"></div>
<div style="left:1978px;top:459px;width:1px;height:597px;background:#e6e6e6;"></div>
<div style="left:1352px;top:424px;width:2px;height:28px;background:#d2d2d2;"></div>
<div style="left:1846px;top:424px;width:2px;height:28px;background:#d2d2d2;"></div>
<div style="left:1956px;top:424px;width:2px;height:28px;background:#d2d2d2;"></div>
<span style="left:1174.45px;top:425.00px;line-height:28px;font-size:22.5px;letter-spacing:0.042px;transform:scaleX(1.0450);transform-origin:0 50%;">Account</span>
<span style="left:1542.57px;top:425.00px;line-height:28px;font-size:22.5px;letter-spacing:0.464px;transform:scaleX(1.0450);transform-origin:0 50%;">Description</span>
<span style="left:1864.45px;top:425.00px;line-height:28px;font-size:22.5px;transform:scaleX(1.0345);transform-origin:0 50%;">Amount</span>
<div style="left:1038px;top:1056px;width:971px;height:2.2px;background:#c4c4c4;"></div>
<span style="left:1126.65px;top:1069.00px;line-height:28px;font-size:22.5px;letter-spacing:0.049px;transform:scaleX(1.0450);transform-origin:0 50%;">Asset Account:</span>
<div style="left:1286px;top:1062px;width:587.8px;height:39.8px;background:#fff;border-radius:2px;box-sizing:border-box;border:2px solid #c4c4c4;"></div>
<div style="left:1290px;top:1066px;width:538px;height:32px;background:#3562d9;"></div>
<div style="left:1832px;top:1066px;width:38px;height:32px;background:#4076f0;border-radius:1px;"></div>
<svg style="left:1840px;top:1075px" width="22" height="14" viewBox="0 0 22 14"><path d="M3 3 L11 11 L19 3" fill="none" stroke="#fff" stroke-width="3" stroke-linecap="round" stroke-linejoin="round"/></svg>
<span style="left:1292.24px;top:1069.00px;line-height:28px;font-size:22.5px;color:#fff;transform:scaleX(1.0207);transform-origin:0 50%;-webkit-text-stroke:0.3px #fff;"><i class=a>1</i><i class=d>000</i> Checking - <i class=a>1</i><i class=d>000</i>.A<i class=a>1</i></span>
<div style="left:1098px;top:1108px;width:150px;height:44px;background:#efefef;"></div>
<div style="left:1098px;top:1152px;width:150px;height:2px;background:#c4c4c4;"></div>
<div style="left:1244px;top:1114px;width:2px;height:34px;background:#d0d0d0;"></div>
<span style="left:1152.96px;top:1119.00px;line-height:28px;font-size:22.5px;transform:scaleX(1.0171);transform-origin:0 50%;">Add</span>
<span style="left:1642.48px;top:1119.00px;line-height:28px;font-size:22.5px;transform:scaleX(1.0240);transform-origin:0 50%;">Total:</span>
<span style="left:1847.05px;top:1119.00px;line-height:28px;font-size:22.5px;"><i class=d>0</i><i class=b>.</i><i class=d>00</i></span>
</div>
<div style="left:1156px;top:56px;width:856px;height:240px;box-sizing:border-box;border:6px solid #4a9ef8"></div>
</div>
</body></html>
